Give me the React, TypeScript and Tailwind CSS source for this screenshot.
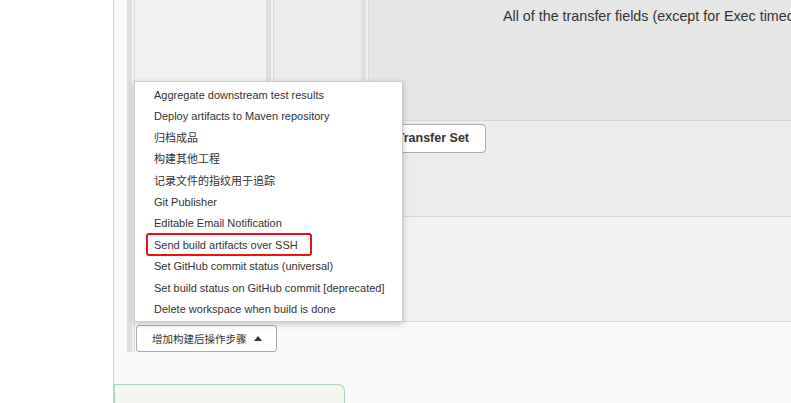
import React from "react";

function Strip() {
  return (
    <div className="flex shrink-0 self-stretch">
      <div className="w-[5px] bg-[#dfdfdf]" />
      <div className="w-[2px] bg-[#f1f1f1]" />
      <div className="w-px bg-[#dadada]" />
    </div>
  );
}

const items = [
  "Aggregate downstream test results",
  "Deploy artifacts to Maven repository",
  "归档成品",
  "构建其他工程",
  "记录文件的指纹用于追踪",
  "Git Publisher",
  "Editable Email Notification",
  "Send build artifacts over SSH",
  "Set GitHub commit status (universal)",
  "Set build status on GitHub commit [deprecated]",
  "Delete workspace when build is done",
];

export default function App() {
  const font = { fontFamily: '"Liberation Sans", "Noto Sans CJK SC", sans-serif' };
  return (
    <div className="relative w-[791px] h-[403px] overflow-hidden flex bg-white text-[#333]" style={font}>
      <div className="w-[114px] shrink-0 bg-white border-r border-[#d2d2d2]" />
      <div className="flex-1 flex flex-col bg-[#f9f9f9]">
        <div className="ml-[13px] flex h-[352px]">
          <Strip />
          <div className="flex-1 flex flex-col">
            <div className="h-[322px] bg-[#f2f2f2] border-b border-[#d6d6d6] flex">
              <div className="w-[131px] shrink-0" />
              <div className="flex-1 flex flex-col">
                <div className="h-[217px] flex border-b border-[#d6d6d6]">
                  <Strip />
                  <div className="flex-1 flex flex-col bg-[#ececec]">
                    <div className="flex h-[121px]">
                      <div className="w-[87px] shrink-0 bg-[#ececec]" />
                      <Strip />
                      <div className="flex-1 min-w-0 bg-[#e6e6e6] border-b border-[#d4d4d4] pl-[134px] pt-[6px] text-[14.3px] whitespace-nowrap overflow-hidden">
                        All of the transfer fields (except for Exec timeout)
                      </div>
                    </div>
                    <div className="flex pl-[78px] pt-[3px]">
                      <button className="h-[29px] px-[16px] bg-white border border-[#a4abb3] rounded-[4px] text-[12.5px] font-bold text-[#333]">
                        Add Transfer Set
                      </button>
                    </div>
                  </div>
                </div>
              </div>
            </div>
            <div className="pt-[3px] pl-px">
              <button className="h-[27px] w-[141px] bg-white border border-[#a4abb3] rounded-[3px] text-[10.5px] text-[#333] flex items-center pl-[15px] gap-[7px]" style={{ fontFamily: '"Noto Sans CJK SC", sans-serif' }}>
                <span>增加构建后操作步骤</span>
                <svg width="8" height="5" viewBox="0 0 8 5"><path d="M0 5 L4 0 L8 5 Z" fill="#333" /></svg>
              </button>
            </div>
          </div>
        </div>
        <div className="mt-[32px] w-[231px] flex-1 bg-[#f4f7ef] border border-b-0 border-[#a9d4b6] rounded-tr-[7px]" />
      </div>

      <div className="absolute left-[134px] top-[81px] w-[269px] h-[241px] bg-white border border-[#cccccc] shadow-[0_2px_6px_rgba(0,0,0,0.22)] pt-[3px]">
        {items.map((t) => (
          <div key={t} className="h-[21.4px] leading-[21.4px] pl-[19px] text-[11px] whitespace-nowrap text-[#333]">
            {t}
          </div>
        ))}
        <div className="absolute left-[11px] top-[151px] w-[166px] h-[23px] border-2 border-[#f01010] rounded-[3px]" />
      </div>
    </div>
  );
}
